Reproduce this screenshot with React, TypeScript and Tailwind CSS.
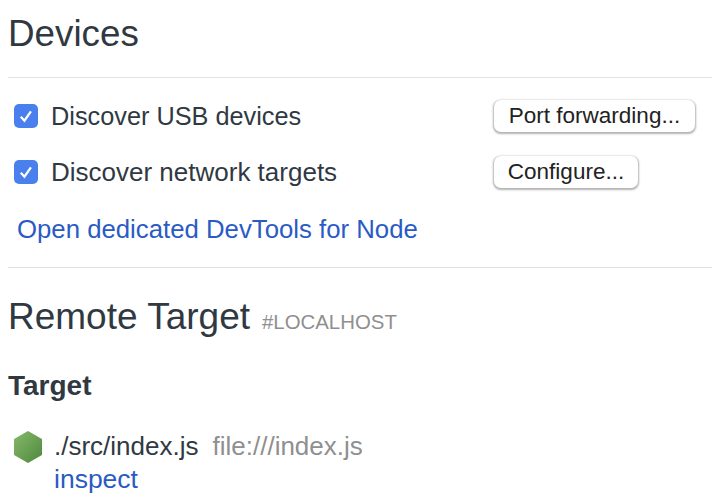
import React from 'react'

const CheckRow = ({ label, button, width, size }: { label: string; button: string; width: string; size: string }) => (
  <div className="flex h-[56px] items-center">
    <span className="ml-[6px] flex h-6 w-6 items-center justify-center rounded-[5px] bg-[#4a80ee]">
      <svg width="18" height="18" viewBox="0 0 16 16" fill="none">
        <path d="M3.4 8.6 L6.6 12.2 L12.4 3.8" stroke="#ffffff" strokeWidth="2" />
      </svg>
    </span>
    <span className={`ml-[13px] w-[443px] ${size} leading-[28px] text-[#303942]`}>{label}</span>
    <button className={`h-[32px] ${width} rounded-[7px] bg-white text-center text-[22.5px] leading-[32px] text-[#222222] shadow-[0_1px_2px_0.5px_rgba(0,0,0,0.3)]`}>
      {button}
    </button>
  </div>
)

const NodeIcon = () => (
  <svg width="30" height="34" viewBox="0 0 30 34">
    <defs>
      <linearGradient id="node" x1="0" y1="0" x2="1" y2="1">
        <stop offset="0" stopColor="#86b868" />
        <stop offset="1" stopColor="#4f8a3f" />
      </linearGradient>
    </defs>
    <path
      d="M15 2 L28 9.5 L28 24.5 L15 32 L2 24.5 L2 9.5 Z"
      fill="url(#node)"
      stroke="url(#node)"
      strokeWidth="2"
      strokeLinejoin="round"
    />
  </svg>
)

export default function App() {
  return (
    <div className="h-[498px] w-[712px] overflow-hidden bg-white pl-2 font-['Liberation_Sans',sans-serif] text-[#303942]">
      <h1 className="flex h-[77px] items-center pb-[9px] text-[36.8px] leading-none">Devices</h1>
      <div className="border-t border-[#e2e2e2] pt-[10px]">
        <CheckRow label="Discover USB devices" button="Port forwarding..." width="w-[201px]" size="text-[25.3px]" />
        <CheckRow label="Discover network targets" button="Configure..." width="w-[144px]" size="text-[26px]" />
        <a className="ml-[9px] block h-[67px] pt-[14px] text-[25.75px] leading-[30px] text-[#2a5bc4]">
          Open dedicated DevTools for Node
        </a>
      </div>
      <div className="border-t border-[#e2e2e2]">
        <div className="flex h-[100px] items-baseline pt-[26px]">
          <h2 className="text-[37px] leading-[46px]">Remote Target</h2>
          <span className="ml-[12px] text-[20.4px] text-[#8f8f8f]">#LOCALHOST</span>
        </div>
        <h3 className="text-[28px] font-bold leading-[36px]">Target</h3>
        <div className="mt-[26px] flex">
          <span className="ml-[5px]">
            <NodeIcon />
          </span>
          <div className="ml-[11px]">
            <div className="flex h-[33px] items-center">
              <span className="text-[26px]">./src/index.js</span>
              <span className="ml-[14px] text-[26px] text-[#8f8f8f]">file:///index.js</span>
            </div>
            <a className="block text-[26.5px] leading-[33px] text-[#2a5bc4]">inspect</a>
          </div>
        </div>
      </div>
    </div>
  )
}
